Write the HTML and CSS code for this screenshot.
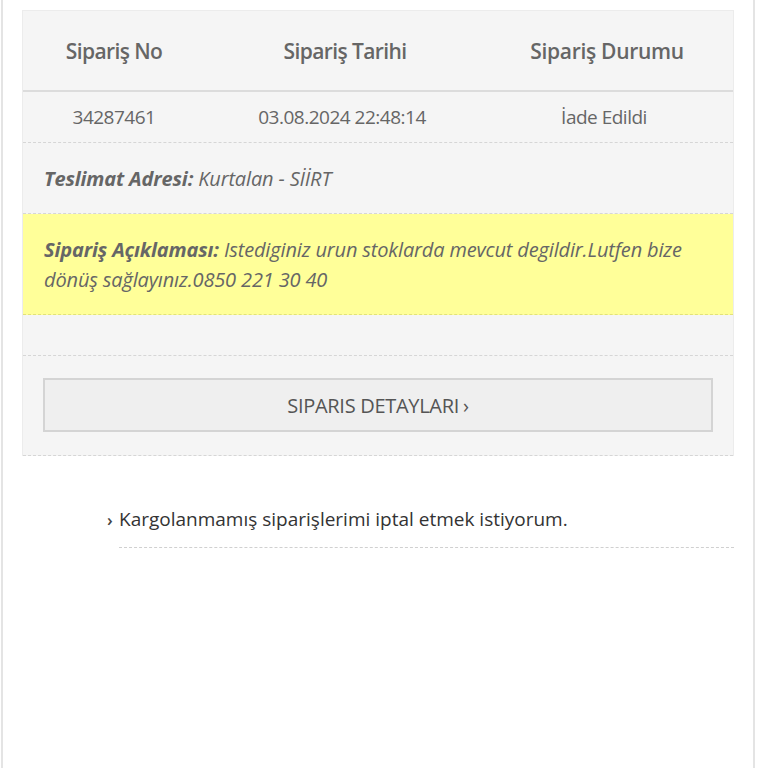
FILE: index.html
```html
<!DOCTYPE html>
<html lang="tr">
<head>
<meta charset="utf-8">
<link rel="stylesheet" href="styles.css">
</head>
<body>
<div class="page">
  <div class="panel">
    <div class="row head">
      <div class="cell">Sipariş No</div>
      <div class="cell">Sipariş Tarihi</div>
      <div class="cell">Sipariş Durumu</div>
    </div>
    <div class="row data">
      <div class="cell">34287461</div>
      <div class="cell">03.08.2024 22:48:14</div>
      <div class="cell">İade Edildi</div>
    </div>
    <div class="line addr"><span><b>Teslimat Adresi:</b> Kurtalan - SİİRT</span></div>
    <div class="line note"><b>Sipariş Açıklaması:</b> Istediginiz urun stoklarda mevcut degildir.Lutfen bize dönüş sağlayınız.0850 221 30 40</div>
    <div class="line empty"></div>
    <div class="btnwrap">
      <div class="btn">SIPARIS DETAYLARI <span class="chev">›</span></div>
    </div>
  </div>
  <div class="cancel">
    <span class="arrow">›</span><span class="ctext">Kargolanmamış siparişlerimi iptal etmek istiyorum.</span>
  </div>
</div>
</body>
</html>
```

FILE: styles.css
```css
html, body {
  margin: 0;
  padding: 0;
  background: #fff;
}
body {
  font-family: "Open Sans", "DejaVu Sans", sans-serif;
  color: #666;
}
.page {
  width: 754px;
  min-height: 768px;
  margin-left: 1px;
  border-left: 2px solid #e4e4e4;
  border-right: 2px solid #e4e4e4;
  padding: 10px 19px 0 19px;
  box-sizing: border-box;
}
.panel {
  background: #f5f5f5;
  border: 1px solid #ececec;
  border-bottom: none;
}
.row {
  display: grid;
  grid-template-columns: 182px 280px 1fr;
  text-align: center;
}
.head {
  height: 79px;
  align-items: center;
  border-bottom: 2px solid #dcdcdc;
  font-size: 21px;
  font-weight: 600;
  letter-spacing: -0.6px;
  color: #666;
}
.head .cell:last-child { padding-right: 4px; letter-spacing: -0.3px; }
.data {
  height: 50px;
  align-items: center;
  border-bottom: 1px dashed #d6d6d6;
  font-size: 19px;
  letter-spacing: -0.5px;
  color: #666;
}
.data .cell:nth-child(2) { padding-right: 6px; }
.data .cell:last-child { padding-right: 10px; }
.line {
  border-bottom: 1px dashed #d6d6d6;
  padding: 0 21px;
  font-style: italic;
  font-size: 20px;
  letter-spacing: -0.15px;
  color: #666;
}
.line b { font-weight: 700; }
.addr {
  height: 70px;
  display: flex;
  align-items: center;
}
.note {
  background: #ffff99;
  border-bottom-color: #e2e27a;
  padding-top: 21px;
  padding-bottom: 22px;
  line-height: 30px;
  height: 101px;
  box-sizing: border-box;
}
.empty {
  height: 40px;
}
.btnwrap {
  padding: 22px 20px 23px 20px;
  border-bottom: 1px dashed #d6d6d6;
}
.btn {
  height: 50px;
  background: #efefef;
  border: 2px solid #d4d4d4;
  display: flex;
  align-items: center;
  justify-content: center;
  font-size: 20px;
  letter-spacing: -0.3px;
  color: #555;
}
.chev { margin-left: 4px; }
.cancel {
  margin: 50px 0 0 85px;
  padding-bottom: 16px;
  display: flex;
  align-items: baseline;
  color: #333;
  font-size: 19px;
  letter-spacing: 0;
  position: relative;
}
.cancel::after {
  content: "";
  position: absolute;
  left: 12px;
  right: 0;
  bottom: 0;
  border-bottom: 1px dashed #d0d0d0;
}
.arrow {
  font-size: 17px;
  font-weight: 600;
  width: 12px;
  color: #444;
}
```
